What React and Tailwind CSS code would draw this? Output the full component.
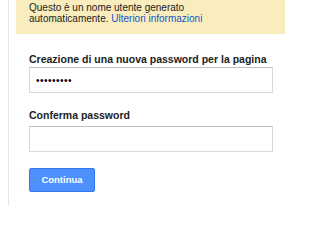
export default function App() {
  return (
    <div
      className="w-[300px] h-[206px] bg-white overflow-hidden flex"
      style={{ fontFamily: '"Liberation Sans", Arial, sans-serif' }}
    >
      <div className="w-[8px] shrink-0" />
      <div className="border-l border-[#e5e5e5] pl-[7px] h-full">
        <div className="w-[269px] h-[34px] bg-[#f9edbe] px-[13px] pt-[2px] text-[10px] leading-[11px] text-[#222]">
          Questo è un nome utente generato
          <br />
          automaticamente. <span className="text-[#15c]">Ulteriori informazioni</span>
        </div>
        <div className="px-[13px] pt-[19px] flex flex-col">
          <div className="text-[10.5px] leading-[12px] font-bold text-[#222]">
            Creazione di una nuova password per la pagina
          </div>
          <div className="mt-[2px] w-[244px] h-[26px] border border-[#d9d9d9] border-t-[#c0c0c0] flex items-center pl-[6px] text-[10px] text-black tracking-[0.5px]">
            •••••••••
          </div>
          <div className="mt-[16px] text-[10.5px] leading-[12px] font-bold text-[#222]">
            Conferma password
          </div>
          <div className="mt-[5px] w-[244px] h-[26px] border border-[#d9d9d9] border-t-[#c0c0c0]" />
          <div className="mt-[16px] w-[66px] h-[24px] rounded-[2px] bg-[#4d90fe] border border-[#3079ed] flex items-center justify-center text-white font-bold text-[9.5px]">
            Continua
          </div>
        </div>
      </div>
    </div>
  );
}
